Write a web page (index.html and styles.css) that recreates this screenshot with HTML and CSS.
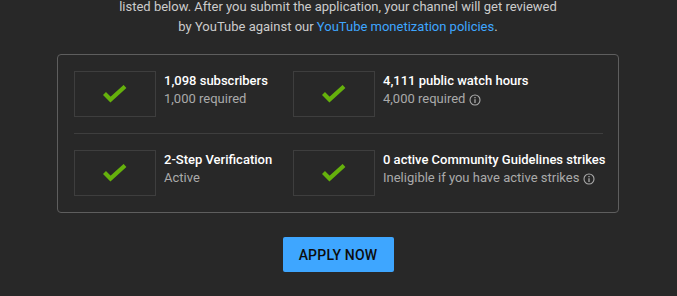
FILE: index.html
```html
<!DOCTYPE html>
<html>
<head>
<meta charset="utf-8">
<link rel="stylesheet" href="styles.css">
</head>
<body>
<div class="page">
  <p class="intro">listed below. After you submit the application, your channel will get reviewed<br>by YouTube against our <a class="link" href="#">YouTube monetization policies</a>.</p>
  <div class="card">
    <div class="row">
      <div class="item">
        <div class="box"><svg class="check" viewBox="0 0 26 18" width="26" height="18"><polyline points="2.5,8.5 8.5,14.5 23,1.5" /></svg></div>
        <div class="texts">
          <div class="title">1,098 subscribers</div>
          <div class="sub">1,000 required</div>
        </div>
      </div>
      <div class="item">
        <div class="box"><svg class="check" viewBox="0 0 26 18" width="26" height="18"><polyline points="2.5,8.5 8.5,14.5 23,1.5" /></svg></div>
        <div class="texts">
          <div class="title">4,111 public watch hours</div>
          <div class="sub">4,000 required <svg class="info" viewBox="0 0 12 12" width="12" height="12"><circle cx="6" cy="6" r="5" /><line x1="6" y1="5.2" x2="6" y2="9" /><line x1="6" y1="3" x2="6" y2="4.2" /></svg></div>
        </div>
      </div>
    </div>
    <div class="divider"></div>
    <div class="row">
      <div class="item">
        <div class="box"><svg class="check" viewBox="0 0 26 18" width="26" height="18"><polyline points="2.5,8.5 8.5,14.5 23,1.5" /></svg></div>
        <div class="texts">
          <div class="title">2-Step Verification</div>
          <div class="sub">Active</div>
        </div>
      </div>
      <div class="item">
        <div class="box"><svg class="check" viewBox="0 0 26 18" width="26" height="18"><polyline points="2.5,8.5 8.5,14.5 23,1.5" /></svg></div>
        <div class="texts">
          <div class="title">0 active Community Guidelines strikes</div>
          <div class="sub">Ineligible if you have active strikes <svg class="info" viewBox="0 0 12 12" width="12" height="12"><circle cx="6" cy="6" r="5" /><line x1="6" y1="5.2" x2="6" y2="9" /><line x1="6" y1="3" x2="6" y2="4.2" /></svg></div>
        </div>
      </div>
    </div>
  </div>
  <div class="actions">
    <button class="apply">APPLY NOW</button>
  </div>
</div>
</body>
</html>
```
FILE: styles.css
```css
html, body {
  margin: 0;
  padding: 0;
  background: #282828;
  overflow: hidden;
}
.page {
  font-family: Roboto, "Liberation Sans", sans-serif;
  display: flex;
  flex-direction: column;
  align-items: center;
  padding-right: 1px;
}
.intro {
  margin: -3px 0 0 0;
  font-size: 13px;
  line-height: 20px;
  color: #cccccc;
  text-align: center;
}
.link {
  color: #3ea6ff;
  text-decoration: none;
}
.card {
  margin-top: 17px;
  width: 562px;
  box-sizing: border-box;
  border: 1px solid #5e5e5e;
  border-radius: 4px;
  padding: 16px;
}
.row {
  display: grid;
  grid-template-columns: 219px 1fr;
}
.item {
  display: flex;
  align-items: flex-start;
  gap: 8px;
}
.box {
  width: 82px;
  height: 46px;
  box-sizing: border-box;
  border: 1px solid #3e3e3e;
  display: flex;
  align-items: center;
  justify-content: center;
  flex: none;
}
.check polyline {
  fill: none;
  stroke: #65b10c;
  stroke-width: 4.2;
}
.texts {
  padding-top: 1px;
  white-space: nowrap;
}
.title {
  font-size: 13px;
  font-weight: 500;
  line-height: 18px;
  color: #ffffff;
}
.sub {
  font-size: 13px;
  line-height: 18px;
  color: #aaaaaa;
  display: flex;
  align-items: center;
  gap: 4px;
}
.info {
  margin-top: 1px;
}
.info circle {
  fill: none;
  stroke: #aaaaaa;
  stroke-width: 1.1;
}
.info line {
  stroke: #aaaaaa;
  stroke-width: 1.3;
}
.divider {
  height: 1px;
  background: #3e3e3e;
  margin: 16px 0;
  width: 529px;
}
.actions {
  margin-top: 24px;
}
.apply {
  font-family: Roboto, "Liberation Sans", sans-serif;
  background: #3ea6ff;
  color: #0d0d0d;
  border: none;
  border-radius: 2px;
  width: 111px;
  height: 35px;
  font-size: 14px;
  font-weight: 500;
  padding: 0;
  letter-spacing: 0.2px;
}
```
